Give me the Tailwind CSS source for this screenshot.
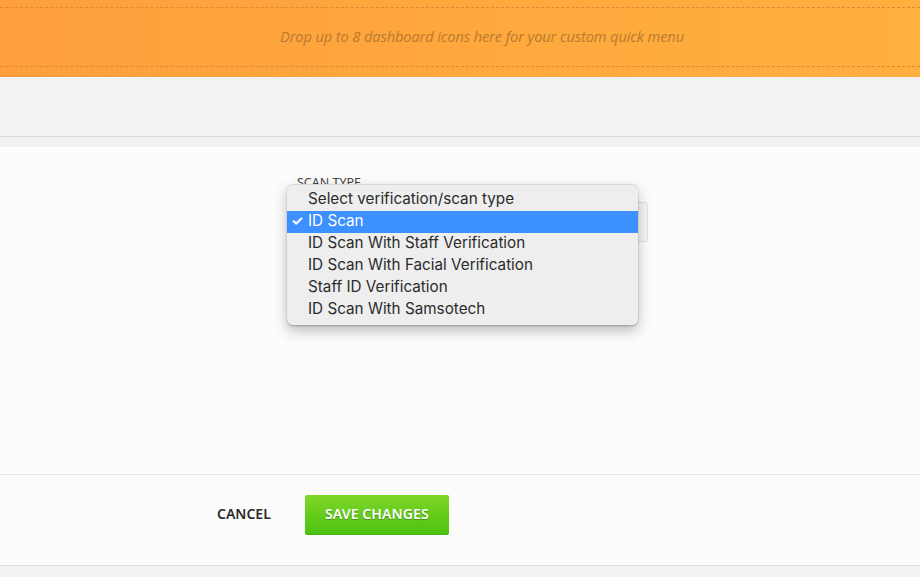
<!doctype html>
<html>

<head>
  <meta charset="UTF-8" />
  <meta name="viewport" content="width=device-width, initial-scale=1.0" />
  <script src="https://cdn.jsdelivr.net/npm/@tailwindcss/browser@4"></script>
</head>

<body>
  <div class="w-[920px] h-[577px] overflow-hidden flex flex-col font-['Noto_Sans',sans-serif] bg-[#f3f3f3] bg-[radial-gradient(#ebebeb_1px,transparent_1px)] bg-size-[3px_3px]">
    <!-- quick menu drop zone -->
    <div class="h-[77px] shrink-0 pt-[7px] bg-[linear-gradient(90deg,#fe9f3c,#ffb03f)]">
      <div class="h-[60px] border-y border-dashed border-[#d98c35] flex items-center justify-center pl-[44px]">
        <p class="text-[14.6px] italic text-[#b97a2e] font-['Open_Sans',sans-serif] tracking-[-0.1px]">Drop up to 8 dashboard icons here for your custom quick menu</p>
      </div>
    </div>

    <div class="h-[70px] shrink-0 pt-[59px]">
      <div class="border-t border-[#d9d9d9]"></div>
    </div>

    <!-- form card -->
    <div class="h-[419px] shrink-0 bg-[#fcfcfc] border-b border-[#dfdfdf] flex flex-col">
      <div class="h-[328px] shrink-0 border-b border-[#e4e4e4] relative pl-[297px] pt-[29px]">
        <label class="block text-[12.5px] leading-[14px] text-[#444]">SCAN TYPE</label>
        <div class="mt-[12px] w-[351px] h-[40px] border border-[#e2e2e2] rounded-[3px] bg-[#f6f6f6]"></div>

        <div class="absolute left-[287px] top-[37px] w-[351px] h-[141px] pt-[4px] bg-[#eeeeee] rounded-[6px] border-t border-[#d8d8d8] shadow-[0_1px_2px_rgba(0,0,0,0.25),0_6px_14px_rgba(0,0,0,0.25)] font-['Inter',sans-serif] text-[15.25px] leading-[20px] text-[#2b2b2b]">
          <div class="pl-[21px] h-[22px]">Select verification/scan type</div>
          <div class="pl-[21px] h-[22px] bg-[#3d90ff] text-white relative"><span class="absolute left-[4px] top-0 text-[14px] font-bold">✓</span>ID Scan</div>
          <div class="pl-[21px] h-[22px]">ID Scan With Staff Verification</div>
          <div class="pl-[21px] h-[22px]">ID Scan With Facial Verification</div>
          <div class="pl-[21px] h-[22px]">Staff ID Verification</div>
          <div class="pl-[21px] h-[22px]">ID Scan With Samsotech</div>
        </div>
      </div>

      <div class="flex items-start pl-[217px] pt-[20px]">
        <button class="h-[36px] text-[14px] font-semibold text-[#2a2a2a]">CANCEL</button>
        <button class="ml-[34px] w-[144px] h-[40px] pb-[2px] rounded-[2px] text-[14px] tracking-[0.1px] font-semibold text-white bg-[linear-gradient(#7fd629,#4cc30f)] border-b border-[#45b30d] [text-shadow:0_1px_1px_rgba(0,0,0,0.3)]">SAVE CHANGES</button>
      </div>
    </div>
  </div>
</body>

</html>
